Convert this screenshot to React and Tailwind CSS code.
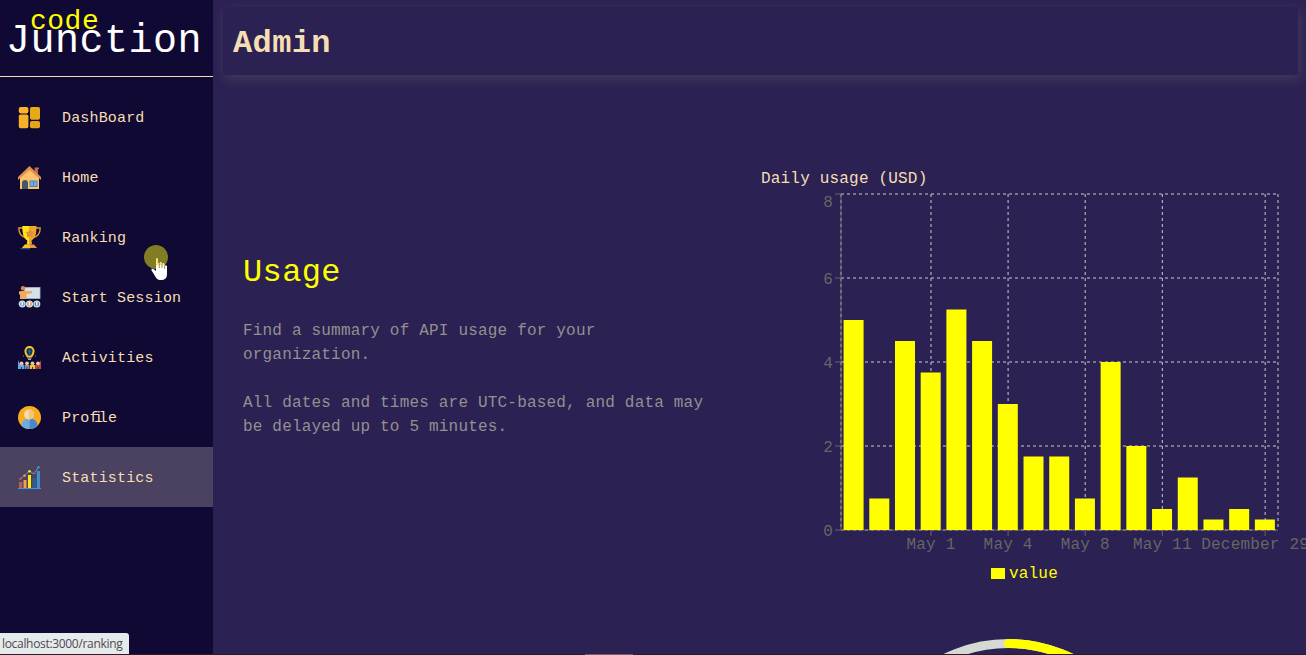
import React from "react";

const DashboardIcon = () => (
  <svg viewBox="0 0 24 24" className="size-6">
    <rect x="0.8" y="1" width="9.6" height="6.4" rx="1.8" fill="#fab32a" />
    <rect x="0.8" y="8.5" width="9.6" height="13.7" rx="1.8" fill="#f8b02a" />
    <rect x="12" y="1" width="10" height="12.8" rx="1.8" fill="#e8a917" />
    <rect x="12" y="15" width="10" height="7.2" rx="1.8" fill="#e5a516" />
  </svg>
);

const HomeIcon = () => (
  <svg viewBox="0 0 24 24" className="size-6">
    <path d="M16.500 1.500H21V3h-1v6h-3z" fill="#c4683f" />
    <path d="M2 11 11.500 2.500 21 11v12H2z" fill="#f9c46b" />
    <path d="M11.500 0 0 11v3l11.500-10L23 14v-3z" fill="#e08e52" />
    <path d="M4 23v-6a3 3 0 0 1 6 0v6z" fill="#4b5464" />
    <rect x="11.500" y="14.500" width="8" height="6.500" fill="#4b86c4" />
    <path d="M12.500 15.500h2.500v4.500h-2.500zM16 15.500h2.500v4.500H16z" fill="#72aee6" />
  </svg>
);

const TrophyIcon = () => (
  <svg viewBox="0 0 24 24" className="size-6">
    <path d="M5.500 2H.8c0 5.500 2 8.500 7 9.500M17.500 2h4.700c0 5.500-2 8.500-7 9.500" fill="none" stroke="#e99a35" strokeWidth="1.3" />
    <path d="M4.500 0h14c0 8-1 12-5 14.500l.5 4h-5l.5-4C5.500 12 4.500 8 4.500 0z" fill="#f0a52b" />
    <path d="M4.500 0H11v18.500H9l.5-4C5.500 12 4.500 8 4.500 0z" fill="#ffe812" />
    <path d="m12 3 1.500 2.500 3 .5-2 2.500.5 3-3-1.200-3 1.200V8L7.500 6l3-.5z" fill="#e58f38" />
    <path d="M7 18.500h9l3 3.500H4z" fill="#e79545" />
    <path d="M7 18.500h5V22H4z" fill="#fac51c" />
    <path d="M2.500 22H12v1.300H2.500z" fill="#28508c" />
  </svg>
);

const SessionIcon = () => (
  <svg viewBox="0 0 24 24" className="size-6">
    <rect x="6.500" y="1.500" width="15.500" height="11" fill="#d5e3e6" stroke="#a9bcc0" strokeWidth=".8" />
    <circle cx="5" cy="2.300" r="2.200" fill="#d28b55" />
    <path d="M1 6q0-1 2-1h5l6 .2v2L8.500 8v5H2V9l-1-1z" fill="#f1a95f" />
    <g stroke="#cfdfe8" strokeWidth="1.300">
      <circle cx="4.200" cy="18" r="2.900" fill="#5d9ed8" />
      <circle cx="11.500" cy="18" r="2.900" fill="#df8e50" />
      <circle cx="18.800" cy="18" r="2.900" fill="#4b849b" />
    </g>
    <path d="M4.200 16v3.500M11.500 16v3.500M18.800 16v3.500" stroke="#fff" strokeWidth="1.400" />
  </svg>
);

const ActivitiesIcon = () => (
  <svg viewBox="0 0 24 24" className="size-6">
    <path d="M9.500 10.500C8 8.500 7.400 7.500 7.400 5a4.100 4.100 0 0 1 8.200 0c0 2.500-.6 3.500-2.100 5.500z" fill="#12365c" stroke="#f8c32b" strokeWidth="2" />
    <path d="M11.500 3v7M9.800 5l1.700 1.500L13.200 5" stroke="#275f8a" fill="none" />
    <path d="M9.500 12h4M10 13.300h3" stroke="#9caab3" strokeWidth="1.200" />
    <path d="M5 10h1M17 10h1" stroke="#b78835" />
    <path d="M0 14 2 18.500h4V23H0z" fill="#62a8e5" />
    <path d="M6.500 19h5v4h-5z" fill="#7991ad" />
    <path d="M12 19h5.500v4H12z" fill="#f3c51e" />
    <path d="m23 14-2 4.500h-3.200V23H23z" fill="#bb4b4b" />
    <g fill="#efc4a1">
      <circle cx="3.500" cy="17.300" r="1.900" />
      <circle cx="9" cy="17.300" r="1.900" />
      <circle cx="14.500" cy="17.300" r="1.900" />
      <circle cx="20" cy="17.300" r="1.900" />
    </g>
    <path d="M3.500 21v2M9 21v2M14.500 21v2M20 21v2" stroke="#263b63" />
  </svg>
);

const ProfileIcon = () => (
  <svg viewBox="0 0 24 24" className="size-6">
    <circle cx="11.500" cy="11.500" r="11.500" fill="#f8ad20" />
    <path d="M3.500 19.500C4 15 7 12.500 11.500 12.500v10.500q-5 0-8-3.500z" fill="#69aee8" />
    <path d="M19.500 19.500c-.5-4.500-3.500-7-8-7v10.500q5 0 8-3.500z" fill="#4589d0" />
    <circle cx="11" cy="8.500" r="5" fill="#fad9a5" />
    <path d="M11 3.500a5 5 0 0 1 0 10z" fill="#f5c57d" />
  </svg>
);

const StatisticsIcon = () => (
  <svg viewBox="0 0 24 24" className="size-6">
    <path d="M1 16h3.300v6.500H1z" fill="#b6604f" />
    <path d="M5.500 14h3v8.500h-3z" fill="#f0a052" />
    <path d="M10 9h3v13.500h-3z" fill="#ffe914" />
    <path d="M14.200 12H18v10.500h-3.800z" fill="#2d5e8c" />
    <path d="M18.800 5H22v17.500h-3.200z" fill="#438ccf" />
    <path d="M0 22.500h23" stroke="#4a91d4" />
    <path d="m2.500 13 4-3.500 5-4.500 4.500 3 4.500-7" fill="none" stroke="#8f969e" strokeWidth=".9" />
    <circle cx="2.500" cy="12.800" r="1.200" fill="#c65f4f" />
    <circle cx="6.500" cy="9.800" r="1.200" fill="#eaa150" />
    <circle cx="11.500" cy="5.200" r="1.300" fill="#ffe914" />
    <circle cx="20.500" cy="1.200" r="1.200" fill="#4a91d4" />
  </svg>
);

const items = [
  { icon: DashboardIcon, label: "DashBoard" },
  { icon: HomeIcon, label: "Home" },
  { icon: TrophyIcon, label: "Ranking" },
  { icon: SessionIcon, label: "Start Session" },
  { icon: ActivitiesIcon, label: "Activities" },
  { icon: ProfileIcon, label: "Profile" },
  { icon: StatisticsIcon, label: "Statistics", active: true },
];

// The "fi" pair is set tight so that it takes little more than one cell.
function Label({ text }) {
  const [before, after] = text.split("fi");
  if (after === undefined) return text;
  return (
    <>
      {before}
      <span className="tracking-[-4.4px]">fi</span>
      {after}
    </>
  );
}

function Sidebar() {
  return (
    <aside className="flex w-[213px] shrink-0 flex-col bg-[#0f0933]">
      <div className="relative h-[77px] border-b border-[#f5deb3] pl-[6px]">
        <div className="pt-[15px] text-[40px] leading-[54px] tracking-[0.48px] whitespace-nowrap text-white">Junction</div>
        <span className="absolute top-[6px] left-[30px] text-[28px] leading-8 tracking-[0.5px] text-[#ffff00]">code</span>
      </div>
      <nav className="flex flex-col pt-[10px]">
        {items.map(({ icon: Icon, label, active }) => (
          <a
            key={label}
            className={
              active
                ? "flex h-[60px] items-center bg-[#4b4160] pt-px pl-[18px] text-[15px] tracking-[0.17px] whitespace-nowrap text-[#f5deb3]"
                : "flex h-[60px] items-center pt-px pl-[18px] text-[15px] tracking-[0.17px] whitespace-nowrap text-[#f5deb3]"
            }
          >
            <Icon />
            <span className="ml-5 pt-[3px]">
              <Label text={label} />
            </span>
          </a>
        ))}
      </nav>
    </aside>
  );
}

const values = [5, 0.75, 4.5, 3.75, 5.25, 4.5, 3, 1.75, 1.75, 0.75, 4, 2, 0.5, 1.25, 0.25, 0.5, 0.25];
const LEFT = 80;
const TOP = 5;
const PLOT_W = 437;
const PLOT_H = 336;
const BAND = PLOT_W / values.length;
const xTicks = [
  { i: 3, label: "May 1" },
  { i: 6, label: "May 4" },
  { i: 9, label: "May 8" },
  { i: 12, label: "May 11" },
  { i: 16, label: "December 29", dx: -10 },
];
const center = (i) => LEFT + BAND * (i + 0.5);
const yPos = (v) => TOP + PLOT_H - (v * PLOT_H) / 8;

function UsageChart() {
  return (
    <svg width="545" height="370" className="block overflow-visible text-[16px] tracking-[0.19px]">
      <g stroke="#cccccc" strokeDasharray="3 3">
        {[0, 2, 4, 6, 8].map((v) => (
          <line key={v} x1={LEFT} x2={LEFT + PLOT_W} y1={yPos(v)} y2={yPos(v)} />
        ))}
        {xTicks.map((t) => (
          <line key={t.i} x1={center(t.i)} x2={center(t.i)} y1={TOP} y2={TOP + PLOT_H} />
        ))}
        <line x1={LEFT} x2={LEFT} y1={TOP} y2={TOP + PLOT_H} />
        <line x1={LEFT + PLOT_W} x2={LEFT + PLOT_W} y1={TOP} y2={TOP + PLOT_H} />
      </g>
      <g stroke="#666666">
        <line x1={LEFT} x2={LEFT + PLOT_W} y1={yPos(0)} y2={yPos(0)} />
        <line x1={LEFT} x2={LEFT} y1={TOP} y2={TOP + PLOT_H} />
        {[0, 2, 4, 6, 8].map((v) => (
          <line key={v} x1={LEFT - 6} x2={LEFT} y1={yPos(v)} y2={yPos(v)} />
        ))}
        {xTicks.map((t) => (
          <line key={t.i} x1={center(t.i)} x2={center(t.i)} y1={yPos(0)} y2={yPos(0) + 6} />
        ))}
      </g>
      <g fill="#ffff00">
        {values.map((v, i) => (
          <rect key={i} x={LEFT + BAND * (i + 0.1)} y={yPos(v)} width="20" height={yPos(0) - yPos(v)} />
        ))}
      </g>
      <g fill="#666666">
        {[0, 2, 4, 6, 8].map((v) => (
          <text key={v} x={LEFT - 8} y={yPos(v) + (v === 8 ? 12.5 : 5.5)} textAnchor="end">
            {v}
          </text>
        ))}
        {xTicks.map((t) => (
          <text key={t.i} x={center(t.i) + (t.dx || 0)} y={yPos(0) + 19} textAnchor="middle">
            {t.label}
          </text>
        ))}
      </g>
    </svg>
  );
}

function UsageRing() {
  return (
    <svg width="297" height="297" viewBox="0 0 297 297" className="block" fill="none" strokeWidth="9">
      <circle cx="148.5" cy="148.5" r="144" stroke="#d6d9d3" />
      <path d="M148.500 4.500A144 144 0 0 1 292.500 148.500" stroke="#ffff00" strokeLinecap="round" />
    </svg>
  );
}

export default function App() {
  return (
    <div className="relative flex h-[655px] w-[1306px] overflow-hidden bg-[#2c2153] font-['Liberation_Mono',monospace]">
      <Sidebar />
      <main className="flex min-w-0 flex-1 flex-col overflow-hidden">
        <header className="mt-[7px] mr-2 ml-[10px] flex h-[68px] shrink-0 items-center bg-[#2c2153] pl-[10px] shadow-[2px_4px_12px_rgba(245,240,150,0.13)]">
          <h1 className="pt-[5px] text-[32px] leading-10 font-bold tracking-[0.38px] text-[#f5deb3]">Admin</h1>
        </header>
        <div className="mt-[91px] flex h-[473px] shrink-0">
          <section className="w-[508px] shrink-0 pt-[83px] pl-[30px]">
            <h2 className="text-[32px] leading-12 tracking-[0.38px] text-[#ffff00]">Usage</h2>
            <p className="mt-[22px] w-[480px] text-base leading-6 tracking-[0.19px] text-[#949090]">
              Find a summary of API usage for your
              <br />
              organization.
              <br />
              <br />
              All dates and times are UTC-based, and data may
              <br />
              be delayed up to 5 minutes.
            </p>
          </section>
          <section className="flex w-[545px] shrink-0 flex-col pl-10">
            <h3 className="h-[23px] pt-px text-base leading-6 tracking-[0.19px] text-[#f5deb3]">Daily usage (USD)</h3>
            <div className="h-[370px]">
              <UsageChart />
            </div>
            <div className="flex h-6 items-center gap-1 pl-[230px] text-base tracking-[0.19px] text-[#ffff00]">
              <span className="mt-[5px] h-[11px] w-[14px] bg-[#ffff00]" />
              <span className="pt-[5px]">value</span>
            </div>
            <div className="mt-[56px] pl-[99px]">
              <UsageRing />
            </div>
          </section>
        </div>
      </main>

      <span className="absolute top-[245px] left-[144px] size-6 rounded-full bg-[#817d24]" />
      <svg className="absolute top-[257px] left-[151px]" width="17" height="24" viewBox="0 0 17 24">
        <path d="M5 2q0-1 1-1t1 1v7H5z" fill="#ffe27a" />
        <path d="M5 8V14L2.500 12Q.5 11 .3 13L4 19q2 4 5 4h1q6 0 6-6V9q-1.500-1.500-2.500 0V7q-1.500-1.500-2.500 0V6Q9.500 4.500 8.500 6H7v2z" fill="#fff" />
        <path d="M5 8V6.500h3.500V6q1-1.500 2.500 0v1q1.500-1.500 2.500 0v1z" fill="#ffe27a" />
        <path d="M8.300 6v5M11 6.500V11M13.600 8v4" stroke="#817d24" strokeWidth=".8" />
      </svg>
      <div className="absolute bottom-px left-0 flex h-[21px] w-[129px] items-center rounded-tr-[3px] bg-[#e7eaeb] pt-px pl-[2px] font-['Open_Sans',sans-serif] text-[12px] tracking-[-0.32px] whitespace-nowrap text-[#4a4a50]">
        localhost:3000/ranking
      </div>
      <div className="absolute bottom-0 left-0 flex h-px w-full bg-[#291d2b] pl-[585px]">
        <span className="h-px w-12 bg-[#7c5c6b]" />
      </div>
    </div>
  );
}
